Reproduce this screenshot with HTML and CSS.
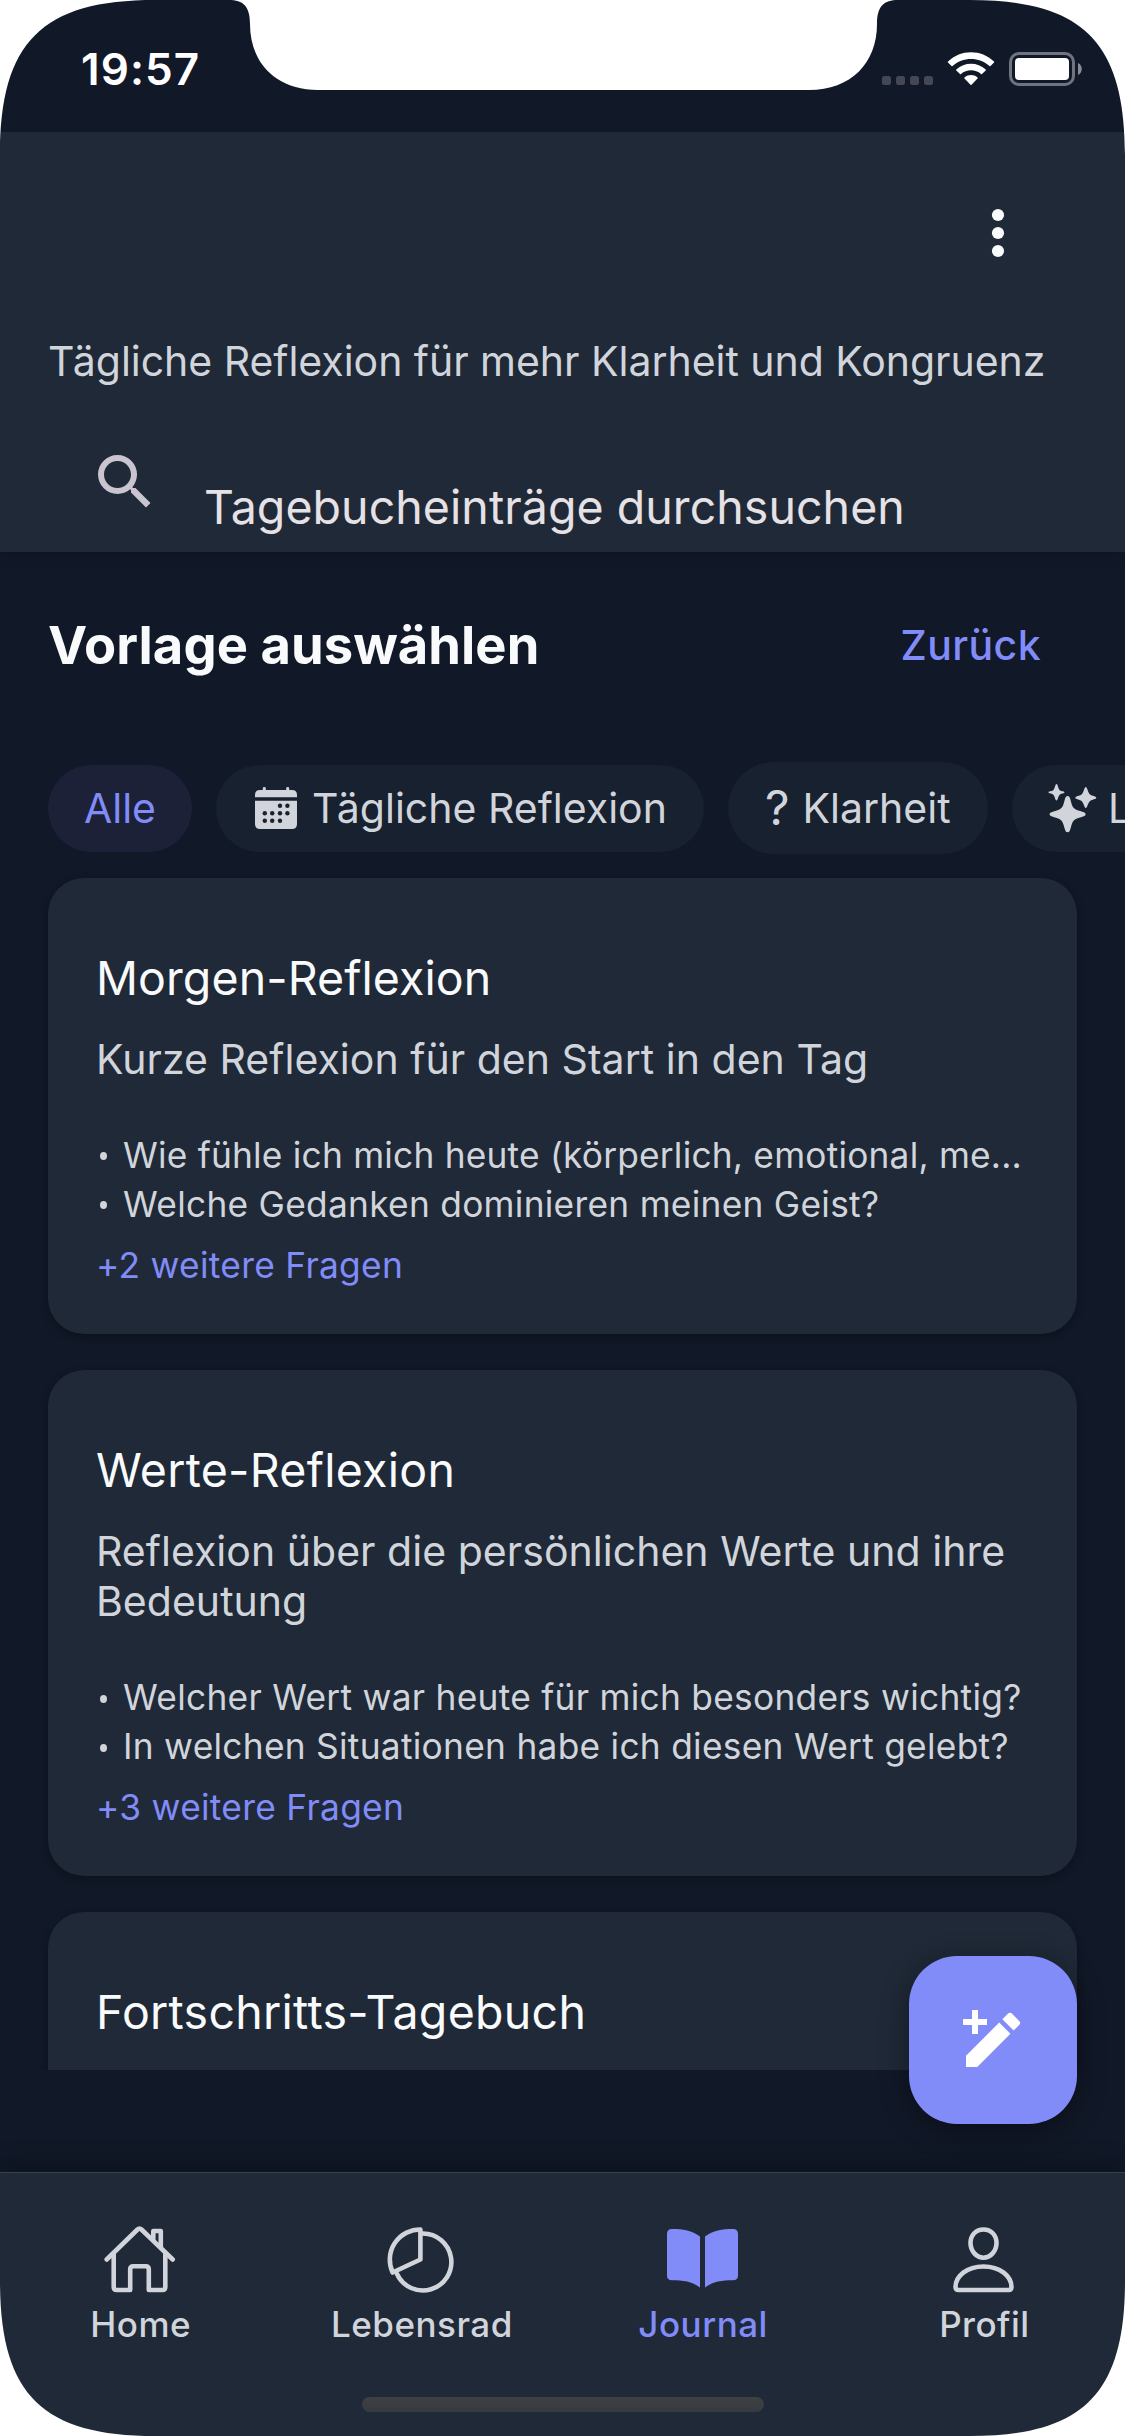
FILE: index.html
```html
<!DOCTYPE html>
<html lang="de">
<head>
<meta charset="utf-8">
<title>Journal</title>
<link rel="stylesheet" href="styles.css">
</head>
<body>
<div class="screen">
  <div class="status">
    <span class="time">19:57</span>
    <svg class="status-icons" width="202" height="36" viewBox="0 0 202 36">
      <g fill="#454854"><rect x="0" y="25" width="9" height="9" rx="2.5"/><rect x="14" y="25" width="9" height="9" rx="2.5"/><rect x="28" y="25" width="9" height="9" rx="2.5"/><rect x="42" y="25" width="9" height="9" rx="2.5"/></g>
      <g fill="#fff">
        <path d="M66 10.500C78.500-2 99.500-2 112 10.500Q112.500 11 112 11.500L108.500 15Q108 15.500 107.500 15C97.500 5.500 80.500 5.500 70.500 15Q70 15.500 69.500 15L66 11.500Q65.500 11 66 10.500Z"/>
        <path d="M74.300 18.500C82.500 10.800 95.500 10.800 103.700 18.500Q104.200 19 103.700 19.500L100 23Q99.500 23.500 99 23C93.500 18 84.500 18 79 23Q78.500 23.500 78 23L74.300 19.500Q73.800 19 74.300 18.500Z"/>
        <path d="M82.500 26.500C86.500 23.300 91.500 23.300 95.500 26.500Q96 27 95.500 27.600L89.500 33.700Q89 34.200 88.500 33.700L82.500 27.600Q82 27 82.500 26.500Z"/>
        <rect x="133" y="7" width="54" height="22" rx="4"/>
      </g>
      <rect x="128.500" y="2.500" width="63" height="31" rx="8.500" fill="none" stroke="#707480" stroke-width="3"/>
      <path d="M196 12C201 14 201 22 196 24Z" fill="#8a8d95"/>
    </svg>
  </div>

  <header class="header">
    <div class="toolbar">
      <svg class="kebab" width="14" height="50" viewBox="0 0 14 50" fill="#f9fafb"><circle cx="7" cy="7" r="6.100"/><circle cx="7" cy="25" r="6.100"/><circle cx="7" cy="43" r="6.100"/></svg>
    </div>
    <p class="intro">Tägliche Reflexion für mehr Klarheit und Kongruenz</p>
    <div class="search">
      <svg width="72" height="72" viewBox="0 0 24 24" fill="#cac4d0"><path d="M9.500 3A6.500 6.500 0 0 1 16 9.500C16 11.110 15.410 12.590 14.440 13.730L14.710 14H15.500L20.500 19L19 20.500L14 15.500V14.710L13.730 14.440C12.590 15.410 11.110 16 9.500 16A6.500 6.500 0 0 1 9.500 3M9.500 5C7 5 5 7 5 9.500C5 12 7 14 9.500 14C12 14 14 12 14 9.500C14 7 12 5 9.500 5Z"/></svg>
      <span class="placeholder">Tagebucheinträge durchsuchen</span>
    </div>
  </header>

  <main class="main">
    <div class="heading">
      <h1>Vorlage auswählen</h1>
      <a class="back">Zurück</a>
    </div>
    <div class="chips">
      <div class="chip active">Alle</div>
      <div class="chip daily">
        <svg width="44" height="44" viewBox="0 0 44 44"><g fill="#d1d5db"><path d="M1 11.200V9Q1 4 6 4H38Q43 4 43 9V11.200Z"/><path d="M1 14.700H43V38Q43 43 38 43H6Q1 43 1 38Z"/><rect x="8.800" y="1" width="3" height="5" rx="1.400"/><rect x="32.200" y="1" width="3" height="5" rx="1.400"/></g><g fill="#18212f"><circle cx="26" cy="19.700" r="2.200"/><circle cx="33.400" cy="19.700" r="2.200"/><circle cx="10.800" cy="27.200" r="2.200"/><circle cx="18.200" cy="27.200" r="2.200"/><circle cx="26" cy="27.200" r="2.200"/><circle cx="33.400" cy="27.200" r="2.200"/><circle cx="10.800" cy="34.700" r="2.200"/><circle cx="18.200" cy="34.700" r="2.200"/><circle cx="26" cy="34.700" r="2.200"/></g></svg>
        <span>Tägliche Reflexion</span>
      </div>
      <div class="chip clarity"><span class="mark">?</span><span>Klarheit</span></div>
      <div class="chip life">
        <svg width="50" height="50" viewBox="0 0 50 50" fill="#d1d5db"><path d="M20.600 13C22.200 13 22.800 14.500 23.400 16.500C25.500 24.500 26 26 33 28C36 28.900 38.600 29.500 38.600 31.200C38.600 33 36 33.500 33 34.400C26 36.500 25.500 38 23.400 46C22.800 48 22.200 49.300 20.600 49.300C19 49.300 18.400 48 17.800 46C15.700 38 15.200 36.500 8.200 34.400C5.200 33.500 2.600 33 2.600 31.200C2.600 29.500 5.200 28.900 8.200 28C15.200 26 15.700 24.500 17.800 16.500C18.400 14.500 19 13 20.600 13Z"/><path d="M9.500 1C11 1 11 6 13 7.500C14.500 8.500 17.500 8 17.500 9.300C17.500 10.700 14.500 10.300 13 11.500C11 13 11 17.500 9.500 17.500C8 17.500 8 13 6 11.500C4.500 10.300 1.500 10.700 1.500 9.300C1.500 8 4.500 8.500 6 7.500C8 6 8 1 9.500 1Z"/><path d="M38.800 4C40.300 4 40.800 9.500 43 11.500C45 13.200 49.300 13 49.300 14.700C49.300 16.300 45 16.200 43 18C40.800 20 40.300 25 38.800 25C37.300 25 36.800 20 34.600 18C32.600 16.200 28.300 16.300 28.300 14.700C28.300 13 32.600 13.200 34.600 11.500C36.800 9.500 37.300 4 38.800 4Z"/></svg>
        <span>Lebensrad</span>
      </div>
    </div>

    <section class="card">
      <h2>Morgen-Reflexion</h2>
      <p class="desc">Kurze Reflexion für den Start in den Tag</p>
      <ul>
        <li class="long">Wie fühle ich mich heute (körperlich, emotional, me...</li>
        <li>Welche Gedanken dominieren meinen Geist?</li>
      </ul>
      <p class="more">+2 weitere Fragen</p>
    </section>
    <section class="card">
      <h2 class="wide">Werte-Reflexion</h2>
      <p class="desc">Reflexion über die persönlichen Werte und ihre<br>Bedeutung</p>
      <ul>
        <li>Welcher Wert war heute für mich besonders wichtig?</li>
        <li>In welchen Situationen habe ich diesen Wert gelebt?</li>
      </ul>
      <p class="more">+3 weitere Fragen</p>
    </section>
    <section class="card">
      <h2 class="wide">Fortschritts-Tagebuch</h2>
      <p class="desc">Fortschritte festhalten</p>
    </section>
  </main>

  <nav class="tabs">
    <a class="tab">
      <svg width="76" height="70" viewBox="0 0 76 70" fill="none" stroke="#d1d5db" stroke-width="4.600" stroke-linecap="round" stroke-linejoin="round"><path d="M3.700 34.500L34.500 4.500Q36.500 2.600 38.500 4.500L69.700 34.500"/><path d="M10.700 29.500V62Q10.700 65 13.700 65H27.200V44.500Q27.200 41.300 30.200 41.300H42.800Q45.800 41.300 45.800 44.500V65H59.400Q62.300 65 62.300 62V29.500"/><path d="M50.300 14V6H57.800V22"/></svg>
      <span>Home</span>
    </a>
    <a class="tab">
      <svg width="72" height="70" viewBox="0 0 72 70" fill="none" stroke="#d1d5db" stroke-width="4.600" stroke-linecap="round" stroke-linejoin="round"><path d="M34.400 4.500V34.500L6.600 47.500A30.300 30.300 0 0 1 34.400 4.500Z"/><path d="M36.500 8.500A28.500 28.500 0 1 1 11 49"/></svg>
      <span>Lebensrad</span>
    </a>
    <a class="tab current">
      <svg width="75" height="70" viewBox="0 0 75 70" fill="#818cf8"><path d="M6 4C17 4 26 5.500 34 11.500V62.500C26 56.500 17 55.300 6 55.300Q1 55.300 1 50.500V9Q1 4 6 4Z"/><path d="M67 4C56 4 47 5.500 39 11.500V62.500C47 56.500 56 55.300 67 55.300Q72 55.300 72 50.500V9Q72 4 67 4Z"/></svg>
      <span>Journal</span>
    </a>
    <a class="tab">
      <svg width="67" height="70" viewBox="0 0 67 70" fill="none" stroke="#d1d5db" stroke-width="4.600" stroke-linejoin="round"><path d="M32.500 4.500C40 4.500 45.500 10 45.500 18C45.500 26 39.500 32.700 32.500 32.700C25.500 32.700 19.500 26 19.500 18C19.500 10 25 4.500 32.500 4.500Z"/><path d="M32.500 41.500C49 41.500 60.500 51 60.500 62Q60.500 65 57.500 65H7.500Q4.500 65 4.500 62C4.500 51 16 41.500 32.500 41.500Z"/></svg>
      <span>Profil</span>
    </a>
  </nav>

  <div class="fab">
    <svg width="72" height="72" viewBox="0 0 24 24" fill="#fff"><path d="M5 2H7V5H10V7H7V10H5V7H2V5H5Z"/><path d="M3 17.250L14.060 6.190L17.810 9.940L6.750 21H3Z"/><path d="M20.710 7.040A1 1 0 0 0 20.710 5.630L18.370 3.290A1 1 0 0 0 16.960 3.290L15.130 5.120L18.880 8.870Z"/></svg>
  </div>
  <div class="home-indicator"></div>
  <svg class="frame" width="1125" height="2436" viewBox="0 0 1125 2436" fill="#fff">
    <path d="M0 0H155C42 0 0 42 0 155Z"/>
    <path d="M1125 0H970C1083 0 1125 42 1125 155Z"/>
    <path d="M0 2436H155C42 2436 0 2394 0 2281Z"/>
    <path d="M1125 2436H970C1083 2436 1125 2394 1125 2281Z"/>
    <path d="M229 0C243 0 250 6 250 24C250 63 276 90 318 90H809C851 90 877 63 877 24C877 6 884 0 898 0Z"/>
  </svg>
</div>
</body>
</html>
```
FILE: styles.css
```css
* { box-sizing: border-box; margin: 0; padding: 0; }
body { background: #fff; font-family: Inter, "Liberation Sans", sans-serif; }
.screen { position: relative; width: 1125px; height: 2436px; overflow: hidden; background: #111827; color: #f9fafb; white-space: nowrap; display: flex; flex-direction: column; }

.status { height: 132px; display: flex; justify-content: space-between; padding: 41px 41px 0 81px; }
.time { font-size: 44px; line-height: 56px; font-weight: 600; letter-spacing: 1.1px; color: #fff; }
.status-icons { margin-top: 10px; margin-left: auto; }

.header { height: 420px; background: #1f2937; position: relative; box-shadow: 0 3px 12px rgba(0,0,0,.18); clip-path: inset(0 0 -30px 0); }
.toolbar { height: 199px; display: flex; justify-content: flex-end; padding: 76px 120px 0 0; }
.intro { padding-left: 48px; font-size: 41px; line-height: 60px; letter-spacing: -.03px; color: #d1d5db; }
.search { display: flex; padding: 55px 0 0 89px; }
.placeholder { margin: 31px 0 0 43px; font-size: 46.5px; line-height: 60px; letter-spacing: .06px; color: #e6e1e5; }

.main { height: 1518px; overflow: hidden; padding: 57px 48px 0; }
.heading { display: flex; justify-content: space-between; align-items: center; height: 72px; padding-right: 36px; }
h1 { font-size: 52.5px; line-height: 72px; font-weight: 700; letter-spacing: .06px; }
.back { font-size: 41px; line-height: 60px; font-weight: 500; letter-spacing: .4px; color: #818cf8; }
.chips { display: flex; align-items: center; gap: 24px; height: 92px; margin: 81px -48px 24px 0; overflow: hidden; }
.chip { flex: none; height: 87px; border-radius: 44px; background: #18212f; color: #d1d5db; font-size: 41px; line-height: 60px; display: flex; align-items: center; }
.active { width: 144px; justify-content: center; background: #1c2138; color: #818cf8; }
.daily { width: 488px; padding-left: 38px; gap: 14px; }
.clarity { width: 260px; height: 92px; border-radius: 46px; padding-left: 37px; gap: 13px; }
.mark { font-size: 48px; }
.life { padding: 0 38px 0 35px; gap: 11px; }

.card { background: #1f2937; border-radius: 36px; padding: 70px 48px 44px; margin-bottom: 36px; box-shadow: 0 3px 9px rgba(0,0,0,.3); }
h2 { font-size: 46.5px; line-height: 60px; font-weight: 400; letter-spacing: .08px; }
.wide { letter-spacing: .28px; }
.desc { margin-top: 26px; font-size: 41px; line-height: 50.7px; letter-spacing: .03px; color: #d1d5db; }
ul { list-style: none; margin-top: 46px; font-size: 35.3px; line-height: 49px; letter-spacing: .28px; color: #d1d5db; }
li { display: flex; align-items: center; }
li::before { content: ""; width: 7px; height: 8px; border-radius: 50%; background: #d1d5db; margin: 2px 16px 0 4px; flex: none; }
.long { letter-spacing: .21px; }
.more { margin-top: 12px; font-size: 35.3px; line-height: 49px; letter-spacing: .3px; color: #818cf8; }

.tabs { margin-top: 102px; height: 264px; border-top: 1px solid #374151; background: #1f2937; display: grid; grid-template-columns: repeat(4, 1fr); box-shadow: 0 -6px 24px rgba(0,0,0,.3); }
.tab { display: flex; flex-direction: column; align-items: center; padding-top: 52px; font-size: 35px; line-height: 48px; font-weight: 500; letter-spacing: .5px; color: #d1d5db; }
.tab span { margin-top: 5px; }
.current { color: #818cf8; }

.fab { position: absolute; left: 909px; top: 1956px; width: 168px; height: 168px; border-radius: 48px; background: #818cf8; display: flex; align-items: center; justify-content: center; box-shadow: 0 6px 28px rgba(0,0,0,.4); }
.home-indicator { position: absolute; left: 362px; top: 2397px; width: 402px; height: 15px; border-radius: 8px; background: linear-gradient(#3e4042, #373a40); }
.frame { position: absolute; left: 0; top: 0; }
```
